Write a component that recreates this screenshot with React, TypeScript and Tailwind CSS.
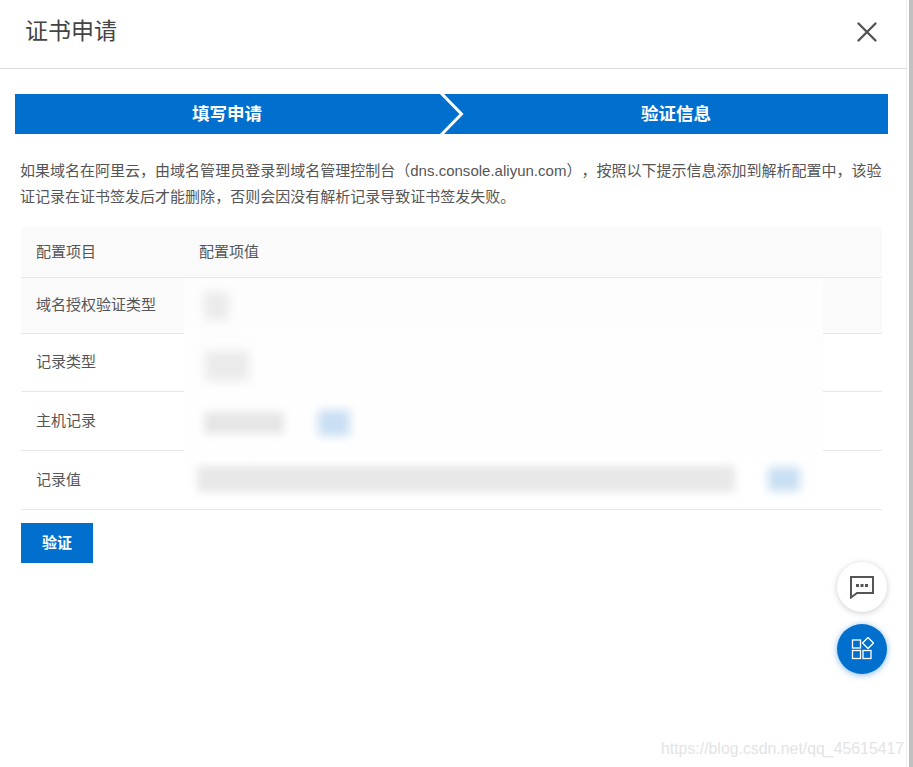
import React from "react";
import { X } from "lucide-react";

const font = "font-['Liberation_Sans','Noto_Sans_CJK_SC',sans-serif]";

const rows = [
  { label: "域名授权验证类型", height: "h-14", bg: "bg-[#fafafa]" },
  { label: "记录类型", height: "h-[58px]", bg: "" },
  { label: "主机记录", height: "h-[59px]", bg: "" },
  { label: "记录值", height: "h-[59px]", bg: "" },
];

const App: React.FC = () => {
  return (
    <div className={`${font} relative h-[767px] w-[913px] overflow-hidden bg-white`}>
      <div className="h-full w-[907px] border-r border-[#eeeeee]">
        {/* Header */}
        <header className="flex h-[69px] items-center justify-between border-b border-[#dddddd] pb-[5px] pl-[25px] pr-[22px]">
          <h1 className="text-[23px] leading-none text-[#444444]">证书申请</h1>
          <X className="h-[34px] w-[34px] text-[#555555]" strokeWidth={1.7} />
        </header>

        {/* Steps */}
        <div className="relative ml-[15px] mt-[25px] flex h-10 w-[873px] items-center bg-[#006fcd] text-[17.5px] font-bold text-white">
          <div className="w-[424px] text-center">填写申请</div>
          <div className="flex-1 pl-[25px] text-center">验证信息</div>
          <svg className="absolute left-[424px] top-0" width="28" height="40" viewBox="0 0 28 40">
            <path d="M2 -1 L22.5 20 L2 41" fill="none" stroke="#ffffff" strokeWidth="3" />
          </svg>
        </div>

        {/* Notice */}
        <p className="ml-[20px] mt-[24px] w-[862px] text-[15px] leading-[26px] tracking-[0.01px] text-[#555555] [text-spacing-trim:space-all] [word-spacing:-0.2px]">
          如果域名在阿里云，由域名管理员登录到域名管理控制台（dns.console.aliyun.com），按照以下提示信息添加到解析配置中，该验证记录在证书签发后才能删除，否则会因没有解析记录导致证书签发失败。
        </p>

        {/* Table */}
        <div className="relative ml-[21px] mt-[17px] w-[861px] text-[15px] text-[#555555]">
          <div className="flex h-[51px] items-center border-b border-[#e8e8e8] bg-[#fafafa] pl-[15px]">
            <div className="w-[163px]">配置项目</div>
            <div>配置项值</div>
          </div>
          {rows.map((row) => (
            <div
              key={row.label}
              className={`flex items-center border-b border-[#e8e8e8] pl-[15px] ${row.height} ${row.bg}`}
            >
              {row.label}
            </div>
          ))}

          {/* Blurred values */}
          <div className="absolute left-[163px] top-[51px] flex h-[230px] w-[639px] flex-col bg-gradient-to-b from-[#fdfdfd] to-white px-[13px]">
            <div className="flex h-14 items-center pl-[7px]">
              <div className="h-7 w-[25px] bg-[#ebebeb] blur-[5px]" />
            </div>
            <div className="flex h-[58px] items-center pl-[8px] pt-[5px]">
              <div className="h-[30px] w-[44px] bg-[#ebebeb] blur-[5px]" />
            </div>
            <div className="flex h-[59px] items-center gap-[34px] pl-[7px] pt-[2px]">
              <div className="h-[22px] w-[80px] bg-[#e6e6e6] blur-[4px]" />
              <div className="h-[26px] w-8 bg-[#c9dff3] blur-[5px]" />
            </div>
            <div className="flex h-[57px] items-center gap-[33px] pb-[2px]">
              <div className="h-[26px] w-[538px] bg-[#e8e8e8] blur-[4px]" />
              <div className="h-6 w-8 bg-[#c9dff3] blur-[5px]" />
            </div>
          </div>
        </div>

        {/* Verify button */}
        <button className="ml-[21px] mt-[13px] flex h-10 w-[72px] items-center justify-center bg-[#006fcd] pt-px text-[15px] font-bold text-white">
          验证
        </button>
      </div>

      {/* Floating buttons */}
      <div className="absolute left-[837px] top-[562px] flex flex-col gap-3">
        <div className="flex h-[50px] w-[50px] items-center justify-center rounded-full bg-white shadow-[0_1px_6px_rgba(0,0,0,0.2)]">
          <svg width="24" height="24" viewBox="0 0 24 24" fill="none">
            <path d="M1 2 H23 V18 H7 L1 22.5 Z" stroke="#555555" strokeWidth="2" />
            <rect x="6" y="9" width="3" height="3" fill="#555555" />
            <rect x="10.5" y="9" width="3" height="3" fill="#555555" />
            <rect x="15" y="9" width="3" height="3" fill="#555555" />
          </svg>
        </div>
        <div className="flex h-[50px] w-[50px] items-center justify-center rounded-full bg-[#006fcd] shadow-[0_1px_6px_rgba(0,111,205,0.5)]">
          <svg width="24" height="24" viewBox="0 0 24 24" fill="none" stroke="#ffffff" strokeWidth="1.3">
            <rect x="2.5" y="3" width="8" height="8" />
            <rect x="2.5" y="13.5" width="8" height="8" />
            <rect x="13" y="13.5" width="8" height="8" />
            <path d="M18 0.5 L23.5 6 L18 11.5 L12.5 6 Z" />
          </svg>
        </div>
      </div>

      {/* Watermark */}
      <div className="absolute left-[661px] top-[739px] text-[15.85px] leading-5 text-[#e4e4e4]">
        https://blog.csdn.net/qq_45615417
      </div>

      {/* Scrollbar */}
      <div className="absolute right-0 top-0 h-full w-1 bg-[#c1c1c1]" />
    </div>
  );
};

export default App;
